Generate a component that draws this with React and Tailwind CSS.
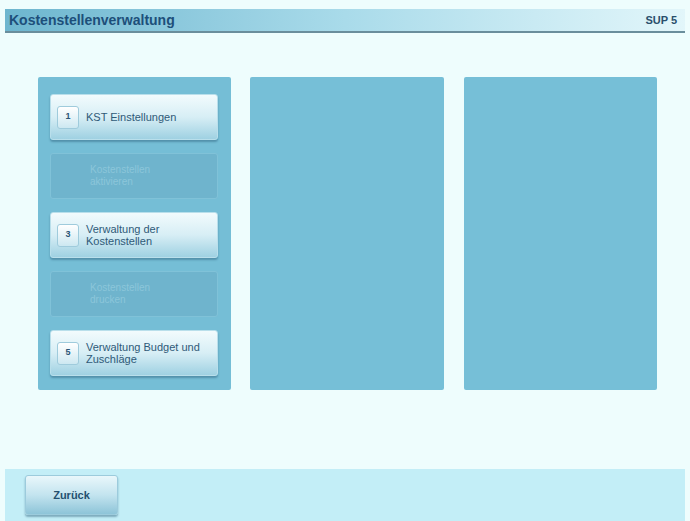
import React from "react";

function MenuButton({ num, lines, disabled }) {
  if (disabled) {
    return (
      <div className="h-[46px] rounded-[3px] bg-[#6fb4cd] shadow-[inset_0_0_0_1px_#80c2d8] flex items-center pl-[40px]">
        <div className="text-[10px] leading-[12px] text-[#8cc6da]">
          {lines.map((l, i) => (
            <div key={i}>{l}</div>
          ))}
        </div>
      </div>
    );
  }
  return (
    <div className="h-[46px] rounded-[3px] bg-gradient-to-b from-[#f2fbfd] via-[#d7eef5] to-[#9fd1e2] border border-[#b9dfeb] shadow-[0_2px_2px_rgba(40,90,120,0.45)] flex items-center gap-[7px] pl-[6px]">
      <div className="w-[22px] h-[23px] rounded-[3px] bg-gradient-to-b from-[#ffffff] to-[#cde8f1] border border-[#9fcbdc] flex items-center justify-center text-[9px] font-bold text-[#2b5576]">
        {num}
      </div>
      <div className="text-[11px] leading-[12px] text-[#2f5a78]">
        {lines.map((l, i) => (
          <div key={i}>{l}</div>
        ))}
      </div>
    </div>
  );
}

export default function App() {
  return (
    <div
      className="w-[690px] h-[521px] bg-[#eefdfd] flex flex-col overflow-hidden"
      style={{ fontFamily: '"Liberation Sans", Arial, sans-serif' }}
    >
      <div className="mt-[9px] mx-[5px] h-[24px] flex items-center justify-between pl-[4px] bg-gradient-to-r from-[#6db6cf] via-[#a9dbea] to-[#e2f6fa] border-b-[2px] border-[#6a8e9c]">
        <span className="text-[14px] font-bold text-[#1d4f7a]">Kostenstellenverwaltung</span>
        <span className="text-[11px] font-bold text-[#2a4f6c] pr-[8px]">SUP 5</span>
      </div>

      <div className="flex-1 flex items-start pt-[44px] pl-[38px] gap-[19px]">
        <div className="w-[193px] h-[313px] bg-[#75bed6] rounded-[2px] pl-[12px] pr-[13px] pt-[17px] flex flex-col gap-[13px]">
          <MenuButton num="1" lines={["KST Einstellungen"]} />
          <MenuButton disabled lines={["Kostenstellen", "aktivieren"]} />
          <MenuButton num="3" lines={["Verwaltung der", "Kostenstellen"]} />
          <MenuButton disabled lines={["Kostenstellen", "drucken"]} />
          <MenuButton num="5" lines={["Verwaltung Budget und", "Zuschläge"]} />
        </div>
        <div className="w-[194px] h-[313px] bg-[#76bfd7] rounded-[2px]" />
        <div className="w-[193px] h-[313px] bg-[#76bfd7] rounded-[2px] ml-[1px]" />
      </div>

      <div className="h-[52px] mx-[5px] bg-[#c3eef7] flex items-center pl-[20px]">
        <div className="w-[93px] h-[40px] rounded-[3px] bg-gradient-to-b from-[#e9f7fb] via-[#c3e4ef] to-[#8dc4d8] border border-[#9ccbdc] shadow-[0_2px_2px_rgba(40,90,120,0.45)] flex items-center justify-center text-[11px] font-bold text-[#24506f]">
          Zurück
        </div>
      </div>
    </div>
  );
}
